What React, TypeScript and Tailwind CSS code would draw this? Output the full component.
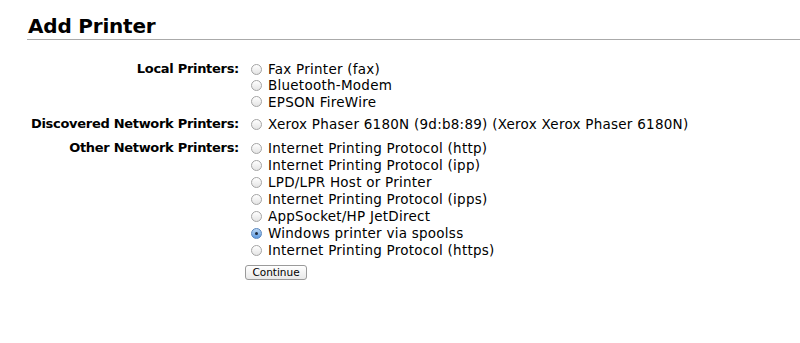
const groups = [
  {
    label: "Local Printers:",
    space: "mt-[21px]",
    leading: "leading-[16.3px]",
    items: ["Fax Printer (fax)", "Bluetooth-Modem", "EPSON FireWire"],
  },
  {
    label: "Discovered Network Printers:",
    space: "mt-[6px]",
    leading: "leading-[16.5px]",
    items: ["Xerox Phaser 6180N (9d:b8:89) (Xerox Xerox Phaser 6180N)"],
  },
  {
    label: "Other Network Printers:",
    space: "mt-[8px]",
    leading: "leading-[16.9px]",
    items: [
      "Internet Printing Protocol (http)",
      "Internet Printing Protocol (ipp)",
      "LPD/LPR Host or Printer",
      "Internet Printing Protocol (ipps)",
      "AppSocket/HP JetDirect",
      "Windows printer via spoolss",
      "Internet Printing Protocol (https)",
    ],
  },
]

const Radio = ({ checked }: { checked?: boolean }) =>
  checked ? (
    <span className="w-[11px] h-[11px] rounded-full border border-[#5a86bd] bg-gradient-to-b from-[#b9d6f3] to-[#5d9ae0] flex items-center justify-center shrink-0">
      <span className="w-[3px] h-[3px] rounded-full bg-[#1c2a3d]" />
    </span>
  ) : (
    <span className="w-[11px] h-[11px] rounded-full border border-[#a4a4a4] bg-gradient-to-b from-[#ffffff] to-[#e4e4e4] shrink-0" />
  )

export default function App() {
  return (
    <div className="w-[800px] h-[343px] bg-white text-black overflow-hidden font-['DejaVu_Sans',sans-serif]">
      {/* heading */}
      <div className="ml-[27px] pt-[13px] border-b border-[#aaaaaa]">
        <h1 className="ml-[1px] text-[20px] leading-[26px] font-bold tracking-[-0.2px]">Add Printer</h1>
      </div>

      {/* printer list */}
      <div className="flex flex-col">
        {groups.map((g) => (
          <div key={g.label} className={`flex ${g.space} ${g.leading}`}>
            <div className="w-[251px] shrink-0 text-right text-[13px] tracking-[-0.3px] font-bold pr-[12px]">{g.label}</div>
            <div className="flex flex-col text-[13.5px] tracking-[0.25px]">
              {g.items.map((it) => (
                <label key={it} className="flex items-center gap-[6px]">
                  <Radio checked={it === "Windows printer via spoolss"} />
                  <span>{it}</span>
                </label>
              ))}
            </div>
          </div>
        ))}
      </div>

      <div className="flex ml-[245px] mt-[6px]">
        <button className="w-[62px] h-[15px] rounded-[3px] border border-[#9a9a9a] bg-gradient-to-b from-[#ffffff] to-[#e9e9e9] text-[10.5px] leading-[13px] font-['DejaVu_Sans',sans-serif]">
          Continue
        </button>
      </div>
    </div>
  )
}
